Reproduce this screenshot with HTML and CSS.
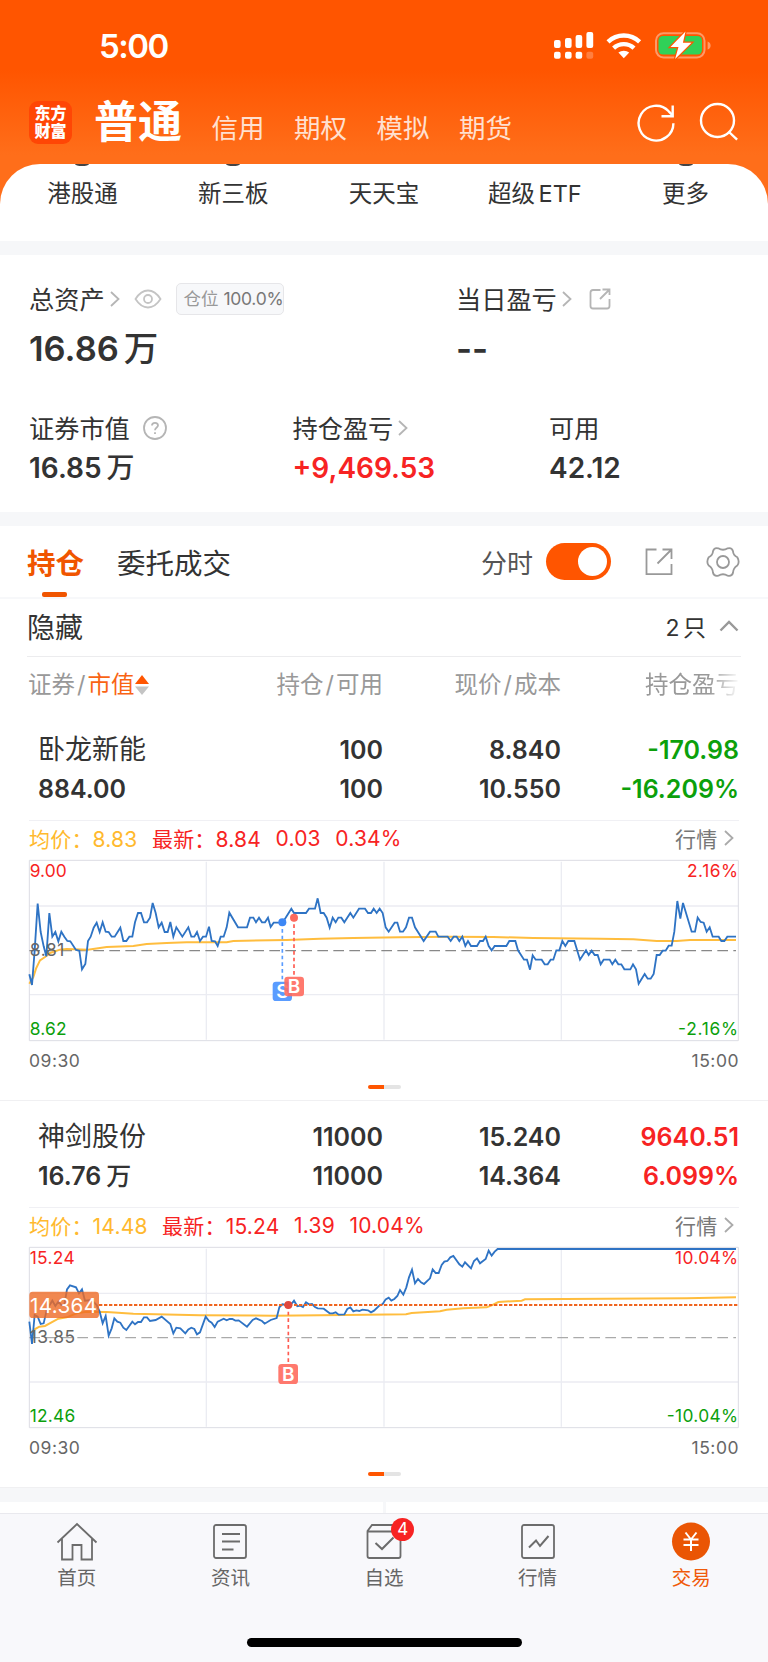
FILE: index.html
```
<!DOCTYPE html>
<html lang="zh-CN">
<head>
  <meta charset="UTF-8" />
  <meta name="viewport" content="width=device-width, initial-scale=1.0"/>
  <title>交易 - 持仓</title>
  <link rel="stylesheet" href="styles.css">
</head>
<body>
  <div class="hero">
    <div class="status-bar">
      <span class="time">5:00</span>
      <svg class="status-icons" width="160" height="32" viewBox="0 0 160 32">
        <g fill="#fff">
          <rect x="1" y="10" width="6.6" height="8" rx="2"/>
          <rect x="12" y="8" width="6.6" height="10" rx="2"/>
          <rect x="22.6" y="5" width="6.6" height="13" rx="2"/>
          <rect x="33.4" y="2" width="6.8" height="16" rx="2"/>
          <rect x="1" y="21.8" width="6.6" height="7" rx="2"/>
          <rect x="12" y="21.8" width="6.6" height="7" rx="2"/>
          <rect x="22.6" y="21.8" width="6.6" height="7" rx="2"/>
          <rect x="33.4" y="21.8" width="6.8" height="7" rx="2" opacity=".25"/>
        </g>
        <g fill="none" stroke="#fff" stroke-width="4.4">
          <path d="M55 11.8a23 23 0 0 1 31.6 0"/>
          <path d="M60.6 18.1a15 15 0 0 1 20.4 0"/>
        </g>
        <path d="M65.4 22.6a8.500 8.500 0 0 1 10.800 0L70.800 28.200z" fill="#fff"/>
        <rect x="103" y="3.200" width="48.500" height="24.200" rx="7.500" fill="none" stroke="#fff" stroke-opacity=".4" stroke-width="2"/>
        <path d="M154.600 11.500q3 1 3 4t-3 4z" fill="#fff" opacity=".4"/>
        <rect x="105.500" y="6" width="43.500" height="18.500" rx="4.500" fill="#30d158"/>
        <path d="M132.500 1.500L117.500 17h8l-3.400 12L138.500 12.800h-8.600z" fill="#fff" stroke="#ff5500" stroke-width="2.500" paint-order="stroke"/>
      </svg>
    </div>

    <div class="nav">
      <div class="logo">东方<br>财富</div>
      <div class="nav-tabs">
        <span class="nav-active">普通</span>
        <span>信用</span>
        <span>期权</span>
        <span>模拟</span>
        <span>期货</span>
      </div>
      <svg class="nav-icons" width="104" height="44" viewBox="0 0 104 44" fill="none" stroke="#fff" stroke-width="2.400">
        <path d="M37.400 23.200a17.400 17.400 0 1 1-4.700-11.900l3.500 3.500"/>
        <path d="M36.700 5.500v10.700H25.500"/>
        <circle cx="81.500" cy="20.500" r="16.500"/>
        <path d="M92.500 31.500l8.600 8.200"/>
      </svg>
    </div>

    <div class="quick">
      <div class="quick-item dot">港股通</div>
      <div class="quick-item dot">新三板</div>
      <div class="quick-item">天天宝</div>
      <div class="quick-item">超级 ETF</div>
      <div class="quick-item dot">更多</div>
    </div>
  </div>

  <div class="overview">
    <div class="assets">
      <div class="cell">
        <div class="label"><span>总资产</span>
          <svg class="arrow" width="10" height="16" viewBox="0 0 10 16"><path d="M1 1l7.500 7L1 15"/></svg>
          <svg class="eye" width="28" height="20" viewBox="0 0 28 20"><path d="M1.500 10C5 4.500 9 1.500 14 1.500S23 4.500 26.500 10C23 15.500 19 18.500 14 18.500S5 15.500 1.500 10z"/><circle cx="14" cy="10" r="4"/></svg>
          <div class="badge">仓位 <b>100.0%</b></div>
        </div>
        <div class="total">16.86<i>万</i></div>
      </div>
      <div class="cell">
        <div class="label"><span>当日盈亏</span>
          <svg class="arrow" width="10" height="16" viewBox="0 0 10 16"><path d="M1 1l7.500 7L1 15"/></svg>
          <svg class="share" width="22" height="22" viewBox="0 0 22 22"><path d="M11.500 2H4Q1.500 2 1.500 4.500V18Q1.500 20.500 4 20.500H18Q20.500 20.500 20.500 18V11M13.500 1.500H20.500V7M20 2L11 11"/></svg>
        </div>
        <div class="total dashes">--</div>
      </div>
    </div>
    <div class="figures">
      <div class="cell">
        <div class="label"><span>证券市值</span>
          <svg class="help" width="24" height="24" viewBox="0 0 24 24"><circle cx="12" cy="12" r="11"/><path d="M9 9.600Q9 6.800 12 6.800T15 9.500C15 11.500 12 11.500 12 14.200M12 16.200v1.800"/></svg>
        </div>
        <div class="amount">16.85<i>万</i></div>
      </div>
      <div class="cell">
        <div class="label"><span>持仓盈亏</span>
          <svg class="arrow" width="10" height="16" viewBox="0 0 10 16"><path d="M1 1l7.500 7L1 15"/></svg>
        </div>
        <div class="amount red">+9,469.53</div>
      </div>
      <div class="cell">
        <div class="label"><span>可用</span></div>
        <div class="amount">42.12</div>
      </div>
    </div>
  </div>

  <div class="tabs">
    <span class="tab active">持仓</span>
    <span class="tab">委托成交</span>
    <span class="switch-label">分时</span>
    <span class="switch"></span>
    <svg class="tool" width="28" height="28" viewBox="0 0 28 28"><path d="M11.500 1.500h-10v24.700h25V16M17.500 1.500h9v9.500M26 2L12.500 15.500"/></svg>
    <svg class="tool" width="34" height="34" viewBox="0 0 34 34"><path d="M12.300 3.300Q17 6.200 21.700 3.300Q26 2.300 27 6.200Q27.200 10.300 31.300 12.200Q34 17 31.300 20.500Q27.200 23 27 27.800Q26 31.700 21.700 30.700Q17 27.800 12.300 30.700Q8 31.700 7 27.800Q6.800 23 2.700 20.500Q0 17 2.700 12.200Q6.800 10.300 7 6.200Q8 2.300 12.300 3.300z"/><circle cx="17" cy="17" r="6"/></svg>
  </div>

  <div class="group">
    <span class="group-name">隐藏</span>
    <span class="group-count">2 只</span>
    <svg width="20" height="12" viewBox="0 0 20 12"><path d="M1.500 10.500L10 2l8.500 8.500" fill="none" stroke="#999" stroke-width="2.400"/></svg>
  </div>

  <div class="row table-head">
    <span>证券<s>/</s><em>市值</em><svg width="14" height="20" viewBox="0 0 14 20"><path d="M0 9L7 0l7 9z" fill="#ff5500"/><path d="M0 11.500h14L7 20z" fill="#c4c4c4"/></svg></span>
    <span>持仓<s>/</s>可用</span>
    <span>现价<s>/</s>成本</span>
    <span class="fade">持仓盈亏</span>
  </div>

  <div class="stock">
    <div class="row holding">
      <span><b class="name">卧龙新能</b><br>884.00</span>
      <span>100<br>100</span>
      <span>8.840<br>10.550</span>
      <span class="green">-170.98<br>-16.209%</span>
    </div>
    <div class="legend">
      <span class="avg">均价：8.83</span>
      <span class="red">最新：8.84</span>
      <span class="red">0.03</span>
      <span class="red">0.34%</span>
      <span class="quote">行情</span>
      <svg width="10" height="16" viewBox="0 0 10 16"><path d="M1 1l7.500 7L1 15" fill="none" stroke="#aaa" stroke-width="1.800"/></svg>
    </div>
    <svg class="chart" width="712" height="183" viewBox="84 56 2136 549">
      <path class="grid" d="M619 64V598M1152 64V598M1684 64V598M88 197H2215M88 463H2215"/>
      <path class="frame" d="M88 60H2215V601H88z"/>
      <path class="base" d="M88 331H2208"/>
      <polyline class="avg-line" points="88,430 100,410 108,385 120,360 135,350 150,338 180,328 200,326 264,328 320,320 400,317 440,311 500,308 560,306 680,306 700,302 860,299 960,295 1060,293 1200,291 1350,289 1480,290 1600,293 1800,295 1900,297 1970,302 2030,302 2070,299 2208,299"/>
      <polyline class="price-line" points="88,402 96,434 104,330 113,190 122,275 131,318 139,348 148,218 157,289 166,275 175,303 184,274 193,289 202,302 211,303 228,329 238,331 246,387 256,371 264,302 272,289 281,262 290,247 299,275 308,246 317,274 326,275 335,289 344,289 361,262 370,302 379,302 388,289 397,289 405,246 414,218 423,218 432,246 441,246 450,232 458,188 467,218 476,261 485,247 494,275 503,275 511,245 520,289 529,261 547,289 565,261 574,289 583,289 591,275 600,302 609,289 618,289 627,259 635,302 645,303 653,317 662,289 671,289 680,261 688,217 714,261 741,261 750,232 760,232 768,246 777,232 786,246 795,246 804,232 812,260 821,247 847,247 857,232 874,205 882,218 918,218 927,205 945,205 953,174 962,218 971,218 980,232 989,262 998,232 1007,246 1015,232 1024,232 1033,246 1051,218 1060,232 1077,205 1095,205 1104,218 1113,218 1121,205 1130,218 1139,205 1148,218 1157,261 1166,274 1184,247 1192,247 1200,274 1209,274 1218,261 1227,232 1236,232 1245,261 1271,302 1290,274 1307,274 1315,289 1343,289 1352,302 1361,289 1370,289 1378,302 1387,289 1396,317 1404,302 1413,317 1431,317 1440,302 1449,302 1457,289 1466,317 1475,330 1484,317 1519,317 1528,302 1546,302 1554,330 1572,358 1581,358 1590,388 1598,345 1607,358 1625,358 1634,372 1643,372 1652,358 1660,358 1669,330 1678,330 1687,302 1696,317 1705,302 1723,302 1740,358 1758,330 1766,344 1775,331 1784,344 1793,344 1802,372 1811,358 1829,358 1837,372 1846,358 1855,372 1864,372 1873,387 1891,387 1899,372 1908,387 1916,430 1934,401 1943,415 1952,415 1961,401 1970,344 1979,344 1988,331 1997,331 2006,316 2015,316 2023,274 2032,182 2041,235 2049,188 2075,274 2085,274 2093,232 2102,245 2111,247 2120,274 2129,261 2138,289 2156,289 2164,302 2173,302 2182,289 2208,289"/>
      <text class="up" x="89" y="111" textLength="111">9.00</text>
      <text class="mid" x="89" y="347" textLength="104">8.81</text>
      <text class="down" x="89" y="583" textLength="111">8.62</text>
      <text class="up" x="2061" y="111" textLength="153">2.16%</text>
      <text class="down" x="2034" y="583" textLength="180">-2.16%</text>
      <!-- sell mark -->
      <path d="M847 246V424" stroke="#5a9cff" stroke-width="5" stroke-dasharray="11 9"/>
      <circle cx="847" cy="246" r="12" fill="#3d87f5"/>
      <rect x="818" y="424" width="58" height="58" rx="10" fill="#5a9cff"/>
      <text class="mark" x="847" y="473">S</text>
      <!-- buy mark -->
      <path d="M882 232V409" stroke="#ff5b50" stroke-width="5" stroke-dasharray="11 9"/>
      <circle cx="882" cy="232" r="12" fill="#fb6a5e"/>
      <rect x="853" y="409" width="59" height="59" rx="10" fill="#ff6a5e" opacity=".9"/>
      <text class="mark" x="882" y="459">B</text>
    </svg>
    <div class="times"><span>09:30</span><span>15:00</span></div>
    <div class="pager"></div>
  </div>

  <div class="stock">
    <div class="row holding">
      <span><b class="name">神剑股份</b><br>16.76<i>万</i></span>
      <span>11000<br>11000</span>
      <span>15.240<br>14.364</span>
      <span class="red">9640.51<br>6.099%</span>
    </div>
    <div class="legend">
      <span class="avg">均价：14.48</span>
      <span class="red">最新：15.24</span>
      <span class="red">1.39</span>
      <span class="red">10.04%</span>
      <span class="quote">行情</span>
      <svg width="10" height="16" viewBox="0 0 10 16"><path d="M1 1l7.500 7L1 15" fill="none" stroke="#aaa" stroke-width="1.800"/></svg>
    </div>
    <svg class="chart" width="712" height="183" viewBox="84 108 2136 549">
      <path class="grid" d="M619 116V650M1152 116V650M1684 116V650M88 250H2215M88 516H2215"/>
      <path class="frame" d="M88 112H2215V653H88z"/>
      <path class="base light" d="M88 383H2208"/>
      <polyline class="avg-line" points="96,368 105,357 118,350 135,348 175,326 200,322 230,310 260,305 320,306 400,311 600,316 820,317 1100,314 1218,313 1235,309 1320,304 1340,299 1390,295 1460,292 1475,286 1495,276 1565,272 1575,268 2060,265 2208,262"/>
      <polyline class="price-line" points="88,335 96,402 104,315 113,320 122,342 131,340 140,300 157,272 166,288 175,275 184,285 193,285 201,238 210,226 228,232 237,250 246,238 255,272 275,270 290,285 299,305 308,340 317,318 326,377 335,355 343,325 352,335 361,338 370,353 379,360 397,335 405,343 414,336 423,336 432,322 441,322 450,333 467,330 485,320 511,342 520,370 529,353 541,355 556,370 565,358 574,353 583,357 591,373 600,367 617,320 627,333 635,338 644,351 653,335 671,326 680,331 689,327 697,327 706,332 716,331 741,350 758,330 768,325 786,333 794,341 812,330 830,324 838,292 847,283 856,284 865,285 874,282 882,272 892,289 901,287 909,291 918,277 927,283 936,282 945,291 953,295 971,296 989,310 998,310 1007,307 1016,314 1033,313 1042,297 1051,292 1060,304 1069,301 1078,303 1087,299 1104,301 1113,307 1122,302 1139,286 1148,282 1157,268 1166,263 1174,272 1183,267 1192,258 1200,240 1210,254 1219,232 1227,202 1236,179 1245,220 1254,207 1263,217 1272,222 1290,205 1298,178 1307,189 1316,189 1325,165 1333,155 1342,153 1351,142 1360,138 1378,163 1387,170 1395,157 1413,175 1422,153 1431,145 1440,160 1457,147 1466,122 1475,137 1484,125 1493,117 2208,117"/>
      <text class="up" x="89" y="163" textLength="135">15.24</text>
      <text class="mid" x="89" y="399" textLength="136">13.85</text>
      <text class="down" x="89" y="635" textLength="137">12.46</text>
      <text class="up" x="2025" y="163" textLength="189">10.04%</text>
      <text class="down" x="2000" y="635" textLength="214">-10.04%</text>
      <!-- cost price -->
      <path d="M297 285H2215" stroke="#f0641e" stroke-width="6" stroke-dasharray="10 5"/>
      <rect x="88" y="245" width="209" height="79" rx="10" fill="#ee6a24" opacity=".8"/>
      <text class="cost" x="90" y="308" textLength="201">14.364</text>
      <!-- buy mark -->
      <path d="M865 285V462" stroke="#ff5b50" stroke-width="5" stroke-dasharray="11 9"/>
      <circle cx="865" cy="285" r="12" fill="#e0483e"/>
      <rect x="835" y="462" width="59" height="60" rx="10" fill="#ff6a5e" opacity=".9"/>
      <text class="mark" x="865" y="512">B</text>
    </svg>
    <div class="times"><span>09:30</span><span>15:00</span></div>
    <div class="pager"></div>
  </div>

  <div class="more"><span></span><span></span></div>

  <div class="tab-bar">
    <div class="bar-item">
      <svg width="42" height="42" viewBox="0 0 42 42"><path d="M1.500 21.500L21 3l19.500 18.500M6 18v20.500h10.500V24h9v14.500H36V18"/></svg>
      首页
    </div>
    <div class="bar-item">
      <svg width="42" height="42" viewBox="0 0 42 42"><rect x="5" y="4" width="32" height="33" rx="2"/><path d="M13 13h18M13 20.500h18M13 28.500h11.500" stroke-width="2.200"/></svg>
      资讯
    </div>
    <div class="bar-item">
      <svg width="42" height="42" viewBox="0 0 42 42"><path d="M4.500 10L9 4h24l4.500 6v25q0 2-2 2h-29q-2 0-2-2zM5 10.500h32" /><path d="M12.500 22l6.500 6 11.500-11.500" stroke-width="2"/></svg>
      <span class="count">4</span>
      自选
    </div>
    <div class="bar-item">
      <svg width="42" height="42" viewBox="0 0 42 42"><rect x="5" y="4" width="32" height="33" rx="2"/><path d="M12 26.500l7-7 4 5.500 8.500-10" stroke-width="2"/></svg>
      行情
    </div>
    <div class="bar-item current">
      <svg width="42" height="42" viewBox="0 0 42 42"><circle cx="21" cy="20.500" r="19" fill="#ea5504" stroke="none"/><path d="M15.500 11.500l5.500 7 5.500-7M21 18.500V30M13.500 18.500h15M13.500 24h15" stroke="#fff" stroke-width="2"/></svg>
      交易
    </div>
  </div>
  <div class="home-indicator"><span></span></div>
</body>
</html>
```
FILE: styles.css
```
* {
  box-sizing: border-box;
}
body {
  margin: 0;
  width: 768px;
  height: 1662px;
  overflow: hidden;
  background: #fff;
  color: #333;
  font-family: Inter, "Noto Sans CJK SC", sans-serif;
}
i, em {
  font-style: normal;
}
.red {
  color: #f72323;
}
.green {
  color: #0ba00b;
}

/* header */
.hero {
  height: 241px;
  background: linear-gradient(#ff5500 70px, #ff6e1a 155px);
}
.status-bar {
  height: 92px;
  padding: 0 55px 0 99px;
  display: flex;
  align-items: center;
  justify-content: space-between;
}
.time {
  color: #fff;
  font-size: 33px;
  font-weight: 600;
  letter-spacing: -1.500px;
}
.nav {
  height: 71.500px;
  padding: 0 28px 0 29px;
  display: flex;
}
.logo {
  width: 43px;
  height: 43px;
  margin-top: 9px;
  padding-top: 4px;
  border-radius: 9px;
  background: #ff4605;
  color: #fff;
  font-size: 16px;
  font-weight: 900;
  line-height: 17.500px;
  text-align: center;
}
.nav-tabs {
  flex: 1;
  margin-left: 22px;
  display: flex;
  align-items: baseline;
  color: #ffe0d0;
  font-size: 26.500px;
  line-height: 60px;
}
.nav-tabs span {
  margin-right: 29.500px;
}
.nav-tabs .nav-active {
  color: #fff;
  font-size: 44px;
  font-weight: 700;
}
.nav-icons {
  margin-top: 8px;
}
.quick {
  height: 77.500px;
  padding: 0 7px;
  display: flex;
  background: #fff;
  border-radius: 40px 40px 0 0;
}
.quick-item {
  flex: 1;
  font-size: 23.500px;
  line-height: 56px;
  text-align: center;
  word-spacing: -3px;
}
.quick-item::before {
  content: "";
  display: block;
  width: 14px;
  height: 2px;
  margin: 0 auto;
  border-radius: 0 0 50% 50% / 0 0 100% 100%;
}
.quick-item.dot::before {
  background: #444;
}

/* assets */
.overview {
  height: 285px;
  padding: 27px 29px 0;
  border: solid #f6f7f9;
  border-width: 14px 0;
}
.assets, .figures {
  display: grid;
  grid-template-columns: 427px 1fr;
}
.figures {
  grid-template-columns: 263.500px 256.500px 1fr;
  margin-top: 35px;
}
.label {
  height: 34px;
  display: flex;
  align-items: center;
  font-size: 25.200px;
  white-space: nowrap;
}
.label span {
  margin-top: -3px;
}
.label svg {
  fill: none;
  stroke: #b5b5b5;
  stroke-width: 1.800;
}
.label .arrow {
  margin-left: 5px;
}
.label .eye {
  margin-left: 14px;
  stroke: #c4c4c4;
}
.label .share {
  margin-left: 17px;
}
.label .help {
  margin-left: 13px;
}
.badge {
  width: 108px;
  height: 32px;
  margin-left: 14px;
  padding-left: 7px;
  border: 1px solid #e6e6e9;
  border-radius: 5px;
  background: #f7f8fa;
  color: #999;
  font-size: 17.500px;
  line-height: 30px;
}
.badge b {
  color: #777;
  font-weight: 400;
  letter-spacing: -0.300px;
}
.total {
  height: 60px;
  line-height: 66px;
  font-size: 34.500px;
  font-weight: 600;
}
.total i, .amount i, .holding i {
  margin-left: 5px;
  font-weight: 500;
}
.amount {
  line-height: 47px;
  font-size: 28px;
  font-weight: 600;
}

/* tabs */
.tabs {
  height: 73px;
  padding: 0 28px 0 27px;
  display: flex;
  align-items: center;
  border-bottom: 2px solid #f7f8fa;
}
.tab {
  position: relative;
  margin-right: 33px;
  font-size: 28.500px;
}
.tab.active {
  color: #f05500;
  font-weight: 700;
}
.tab.active::after {
  content: "";
  position: absolute;
  left: 15px;
  bottom: -15px;
  width: 25px;
  height: 5px;
  border-radius: 2px;
  background: #f05500;
}
.switch-label {
  margin-left: auto;
  color: #555;
  font-size: 26px;
}
.switch {
  width: 65px;
  height: 37px;
  margin: 0 34px 0 13px;
  padding: 4px;
  border-radius: 19px;
  background: #ff5500;
}
.switch::after {
  content: "";
  display: block;
  width: 29px;
  height: 29px;
  margin-left: auto;
  border-radius: 50%;
  background: #fff;
}
.tool {
  fill: none;
  stroke: #999;
  stroke-width: 1.800;
}
.tool + .tool {
  margin-left: 33px;
}
.group {
  height: 57.500px;
  margin: 0 27px;
  padding: 0 2px 2px 0;
  display: flex;
  align-items: center;
  border-bottom: 1.500px solid #ececee;
  font-size: 28px;
}
.group-count {
  margin: 0 13px 0 auto;
  font-size: 23px;
  word-spacing: -3px;
}

/* holdings table */
.row {
  padding: 0 29px 0 28px;
  display: grid;
  grid-template-columns: 1fr 170px 178px 178px;
  text-align: right;
}
.row > span:first-child {
  text-align: left;
}
.table-head {
  height: 57.500px;
  line-height: 56px;
  color: #999;
  font-size: 23.500px;
}
.table-head em {
  color: #f96414;
}
.table-head s {
  margin: 0 2px;
  text-decoration: none;
}
.table-head svg {
  margin-left: 1px;
  vertical-align: -2px;
}
.fade {
  -webkit-mask-image: linear-gradient(to right, #000 148px, transparent 179px);
  mask-image: linear-gradient(to right, #000 148px, transparent 179px);
}
.stock {
  height: 387px;
  border-bottom: 1px solid #f0f0f2;
}
.holding {
  height: 105.500px;
  padding-top: 16.500px;
  line-height: 39px;
  font-size: 25px;
  font-weight: 600;
}
.holding > span:first-child {
  padding-left: 10px;
}
.holding .name {
  font-size: 27px;
  font-weight: 400;
  line-height: 36px;
}
.legend {
  height: 40px;
  margin: 0 29px;
  padding: 0 5px 4px 0;
  display: flex;
  align-items: center;
  gap: 14.500px;
  border-top: 1.500px solid #f0f0f4;
  font-size: 21px;
  letter-spacing: 0.200px;
}
.avg {
  color: #ffb92e;
}
.quote {
  margin-left: auto;
  margin-right: -8px;
  color: #777;
}
.chart {
  display: block;
  margin: -1px 28px 0;
  font-size: 52px;
}
.chart path, .chart polyline {
  fill: none;
}
.grid {
  stroke: #ebecf2;
  stroke-width: 4;
}
.frame {
  stroke: #dcdde4;
  stroke-width: 3;
}
.base {
  stroke: #888;
  stroke-width: 4;
  stroke-dasharray: 32 16;
}
.base.light {
  stroke: #aaa;
}
.avg-line {
  stroke: #ffbd3e;
  stroke-width: 6;
}
.price-line {
  stroke: #2e73c4;
  stroke-width: 5.500;
}
.up {
  fill: #f72323;
}
.mid {
  fill: #666;
}
.down {
  fill: #0ba00b;
}
.mark {
  fill: #fff;
  font-size: 57px;
  font-weight: 600;
  text-anchor: middle;
}
.cost {
  fill: #fff;
  font-size: 62px;
}
.times {
  height: 38px;
  margin: 0 29px;
  display: flex;
  justify-content: space-between;
  color: #666;
  font-size: 17.500px;
  letter-spacing: 0.500px;
  line-height: 38px;
}
.pager {
  width: 33px;
  height: 4px;
  margin: 5px auto 0;
  border-radius: 2px;
  background: linear-gradient(to right, #ff5500 50%, #e4e4e4 50%);
}
.more {
  height: 24.500px;
  border-top: 14.500px solid #f6f7f9;
  display: flex;
  justify-content: space-between;
  background: #f6f7f9;
}
.more span {
  width: 382.500px;
  background: #fff;
}

/* bottom bar */
.tab-bar {
  height: 96px;
  display: flex;
  background: #f8f8fb;
  border-top: 1.500px solid #e9e9ee;
}
.bar-item {
  position: relative;
  flex: 1;
  padding-top: 7px;
  display: flex;
  flex-direction: column;
  align-items: center;
  color: #666;
  font-size: 19.500px;
  line-height: 31px;
}
.bar-item svg {
  fill: none;
  stroke: #6c6c6c;
  stroke-width: 1.800;
}
.bar-item.current {
  color: #f05a0a;
}
.count {
  position: absolute;
  left: 84px;
  top: 4px;
  width: 23px;
  height: 23px;
  border-radius: 50%;
  background: #f72323;
  color: #fff;
  font-size: 17px;
  line-height: 23px;
  text-align: center;
}
.home-indicator {
  height: 54px;
  padding-top: 29px;
  background: #f8f8fb;
}
.home-indicator span {
  display: block;
  width: 275px;
  height: 9px;
  margin: 0 auto;
  border-radius: 5px;
  background: #000;
}
```
